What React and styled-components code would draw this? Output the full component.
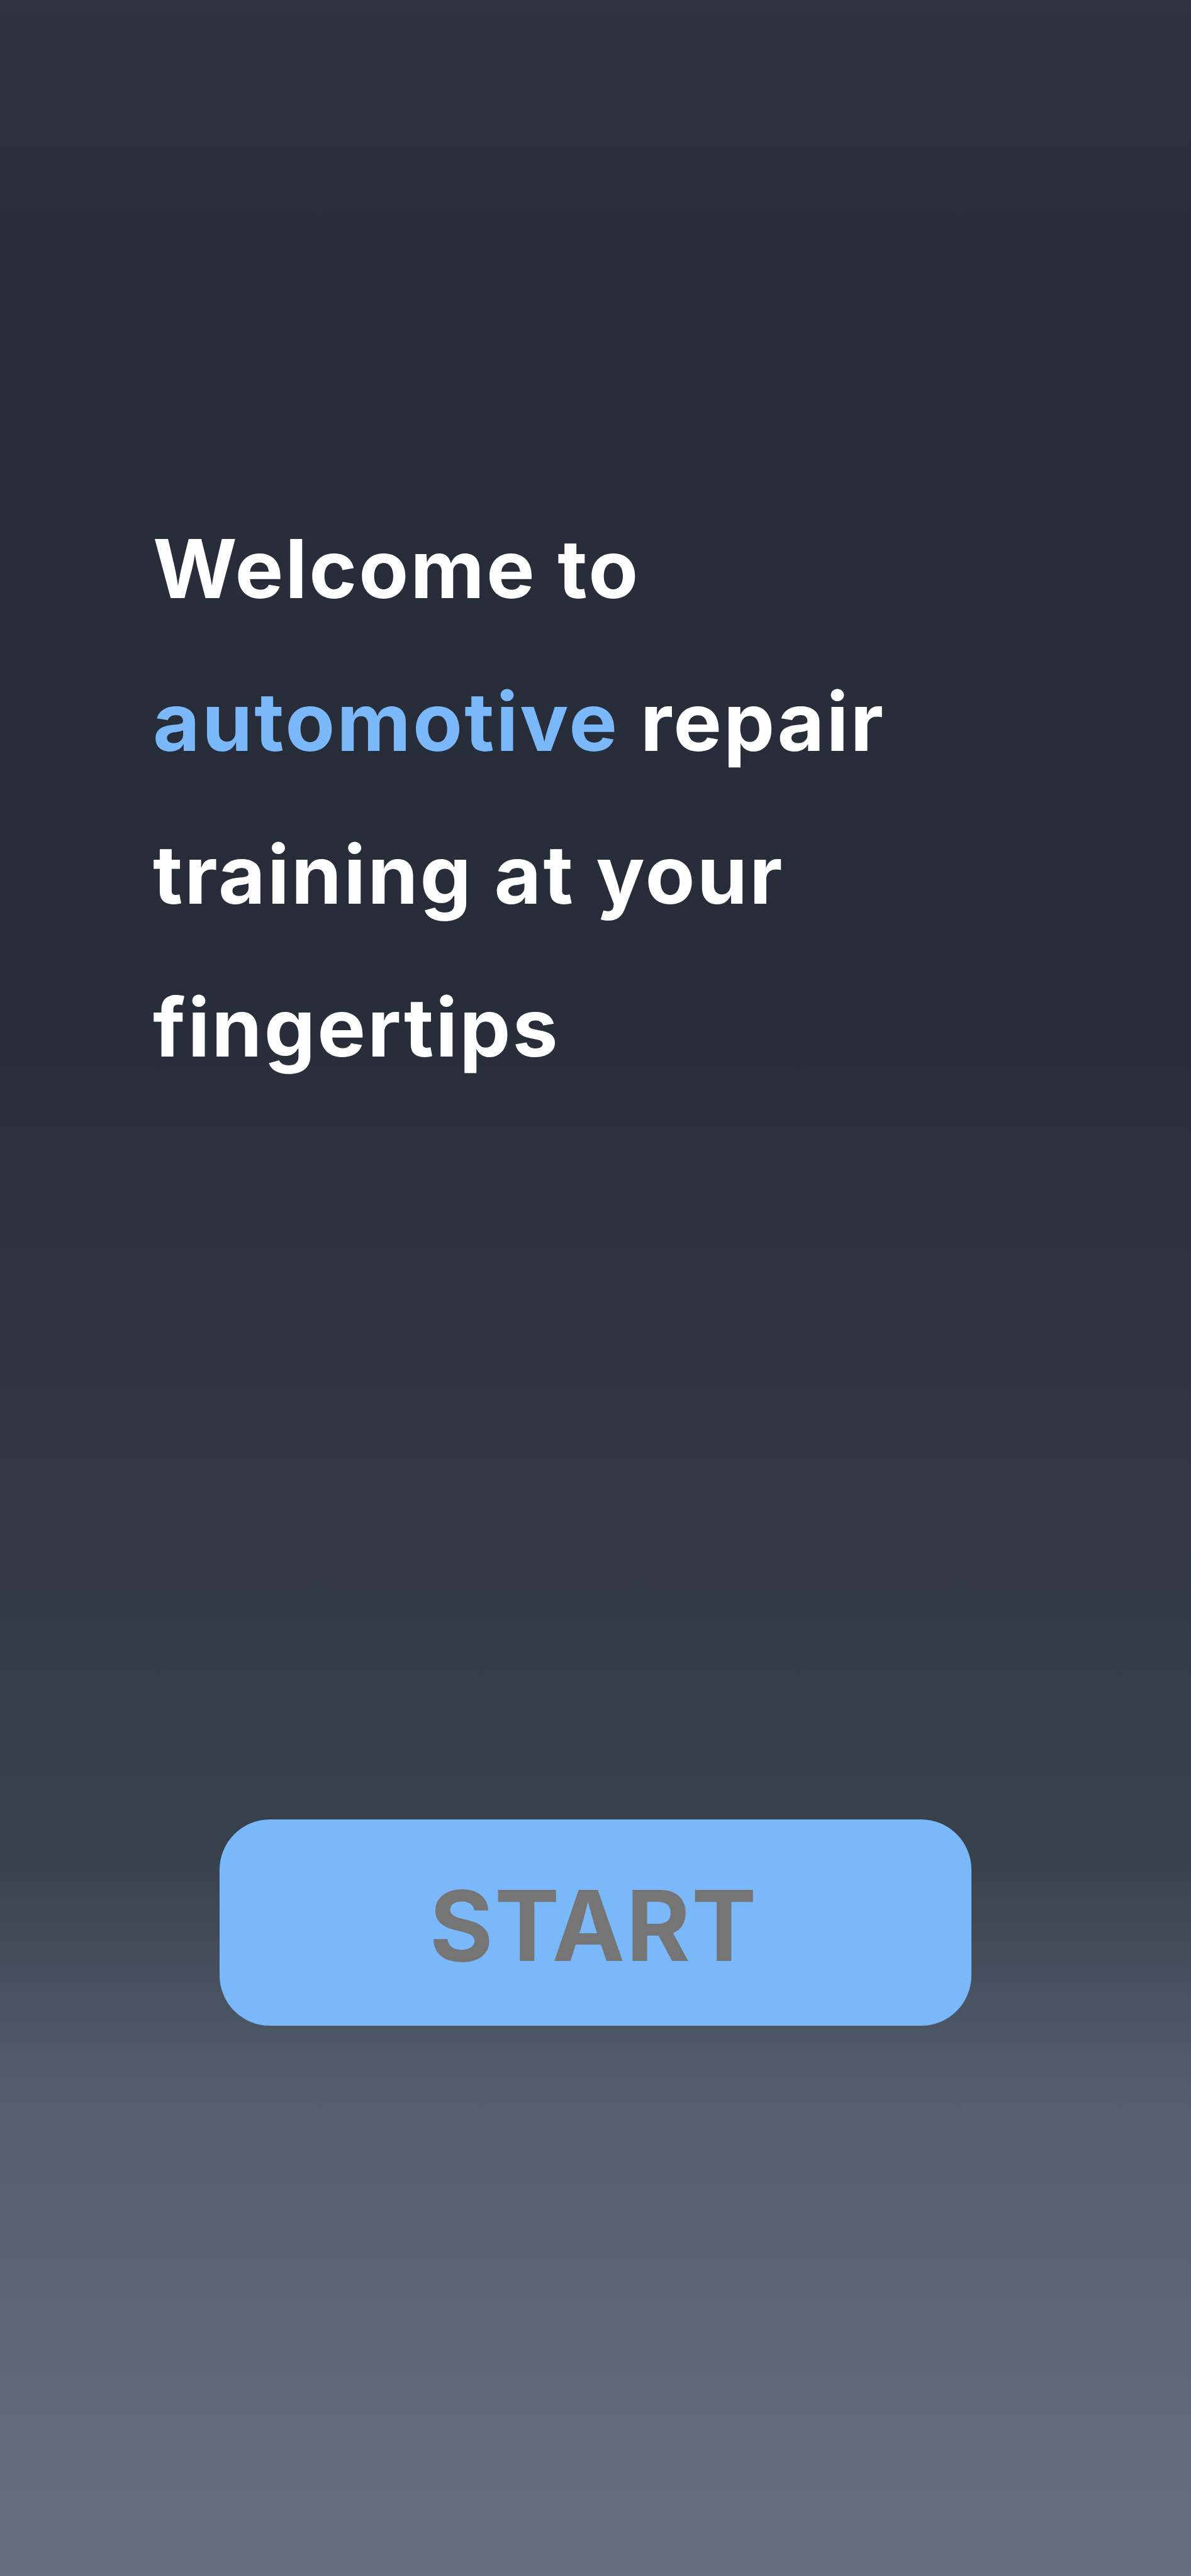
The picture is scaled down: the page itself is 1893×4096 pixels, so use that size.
import React from "react";
import styled, { createGlobalStyle } from "styled-components";

const GlobalStyle = createGlobalStyle`
  * { box-sizing: border-box; }
  body { margin: 0; font-family: Inter, "Liberation Sans", sans-serif; }
`;

const Screen = styled.main`
  min-height: 100vh;
  padding: 783px 243px 0;
  background: linear-gradient(
    180deg,
    #2d343f 0%,
    #272d38 12%,
    #282e39 25%,
    #272d38 38%,
    #333946 60%,
    #38424d 72%,
    #525d6e 81%,
    #667082 100%
  );
`;

const Headline = styled.h1`
  max-width: 1280px;
  margin: 0;
  color: #ffffff;
  font-size: 129px;
  font-weight: 700;
  line-height: 243px;
  letter-spacing: 3px;
`;

const Accent = styled.span`
  color: #7ab8f9;
`;

const StartButton = styled.button`
  display: block;
  width: 1195px;
  max-width: 100%;
  height: 328px;
  margin: 1138px auto 0;
  padding: 8px 6px 0 0;
  border: 0;
  border-radius: 80px;
  background: #7ab8f9;
  color: #757575;
  font: inherit;
  font-size: 155px;
  font-weight: 700;
  letter-spacing: 2px;
  cursor: pointer;
`;

export default function App() {
  return (
    <>
      <GlobalStyle />
      <Screen>
        <Headline>
          Welcome to <Accent>automotive</Accent> repair training at your fingertips
        </Headline>
        <StartButton type="button">START</StartButton>
      </Screen>
    </>
  );
}
